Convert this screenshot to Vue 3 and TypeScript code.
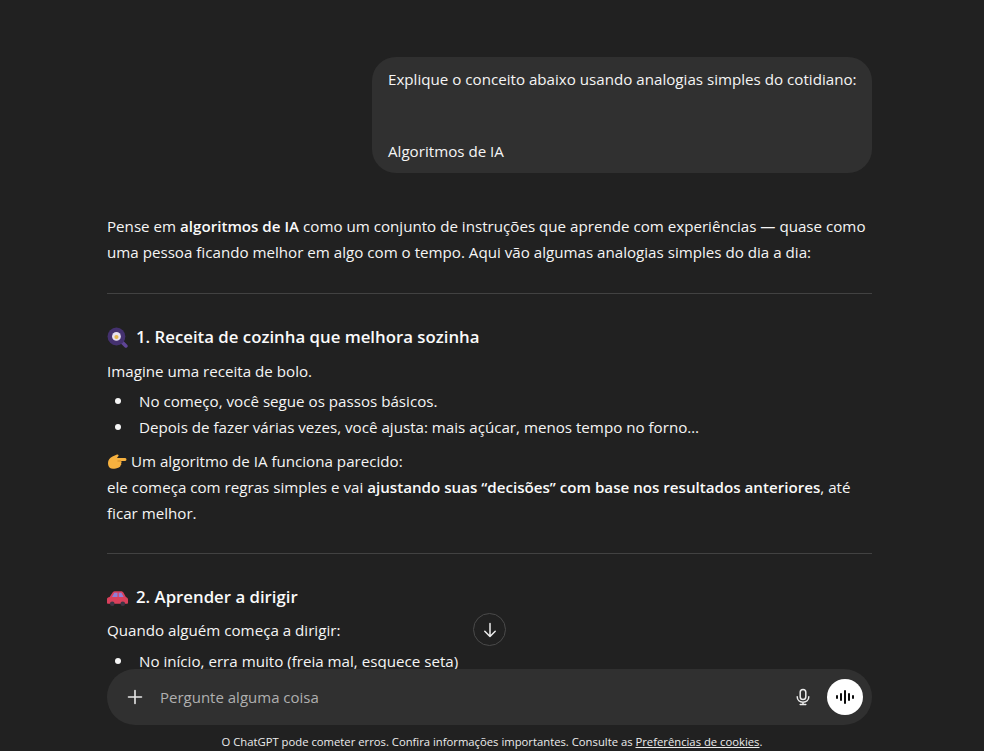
<script setup lang="ts">
const bars: number[] = [4, 8, 14, 8, 4]
</script>

<template>
  <div class="page">
    <main class="scroll">
      <div class="thread">
        <div class="user-row">
          <div class="bubble">
            <p>Explique o conceito abaixo usando analogias simples do cotidiano:</p>
            <p class="gap-line">Algoritmos de IA</p>
          </div>
        </div>

        <p class="line intro">Pense em <strong>algoritmos de IA</strong> como um conjunto de instruções que aprende com experiências — quase como uma pessoa ficando melhor em algo com o tempo. Aqui vão algumas analogias simples do dia a dia:</p>

        <hr class="rule" />

        <h3 class="heading">
          <svg class="emoji" viewBox="0 0 20 20">
            <path d="M13 13l5 5" stroke="#5f4596" stroke-width="3.400" stroke-linecap="round" />
            <circle cx="9" cy="9" r="8.500" fill="#44316f" />
            <circle cx="9" cy="9" r="4.200" fill="#e6e0f0" />
            <circle cx="9" cy="9.500" r="2" fill="#e3b64f" />
          </svg>
          <span>1. Receita de cozinha que melhora sozinha</span>
        </h3>
        <p class="line tight">Imagine uma receita de bolo.</p>
        <ul class="list">
          <li>No começo, você segue os passos básicos.</li>
          <li>Depois de fazer várias vezes, você ajusta: mais açúcar, menos tempo no forno…</li>
        </ul>
        <p class="line block">
          <svg class="emoji hand" viewBox="0 0 20 20">
            <path d="M1 11c0-3 1.500-5 4.500-6.500L10 2.500c1.300-.5 2.300 1 1 2L10 6h8.200c1.700 0 1.700 3 0 3H14c.8.7.8 1.800.1 2.400.5.900.1 1.800-.7 2.200.1 1-.6 1.700-1.500 1.800C9 16.500 5 17.500 3 16 1.700 15 1 13 1 11z" fill="#f6b13f" />
            <path d="M10.500 9H14" stroke="#cf8a28" stroke-width="1" />
          </svg>
          Um algoritmo de IA funciona parecido:<br />ele começa com regras simples e vai <strong>ajustando suas “decisões” com base nos resultados anteriores</strong>, até ficar melhor.
        </p>

        <hr class="rule second" />

        <h3 class="heading">
          <svg class="emoji" viewBox="0 0 20 20">
            <path d="M0 15v-3.500c0-1 1-1.800 2.500-2L5.500 5C6 4.300 7 4 8 4h5c1.200 0 2 .5 2.600 1.300L18 9.500c1.300.5 2 1.300 2 2.500v3c0 .5-.5 1-1 1H1c-.5 0-1-.5-1-1z" fill="#d9405c" />
            <path d="M7 5.500h3v4H4.800zM11.200 5.500h2.500l2.200 4h-4.700z" fill="#8f7fd6" />
            <circle cx="5" cy="16" r="2.200" fill="#3d3545" />
            <circle cx="15" cy="16" r="2.200" fill="#3d3545" />
          </svg>
          <span>2. Aprender a dirigir</span>
        </h3>
        <p class="line tight nudge">Quando alguém começa a dirigir:</p>
        <ul class="list">
          <li>No início, erra muito (freia mal, esquece seta)</li>
        </ul>
      </div>

      <button class="to-bottom" type="button" aria-label="Rolar para baixo">
        <svg viewBox="0 0 20 20" width="20" height="20" fill="none" stroke="#ececec" stroke-width="1.500" stroke-linecap="round" stroke-linejoin="round">
          <path d="M10 3.500v13M4.800 11.200l5.200 5.300 5.200-5.300" />
        </svg>
      </button>
    </main>

    <div class="composer">
      <svg class="plus" viewBox="0 0 20 20" width="20" height="20" fill="none" stroke="#e6e6e6" stroke-width="1.600" stroke-linecap="round">
        <path d="M10 3.500v13M3.500 10h13" />
      </svg>
      <span class="placeholder">Pergunte alguma coisa</span>
      <svg class="mic" viewBox="0 0 20 20" width="20" height="20" fill="none" stroke="#ececec" stroke-width="1.500" stroke-linecap="round">
        <rect x="7.200" y="2.500" width="5.600" height="10" rx="2.800" />
        <path d="M4.200 9.800c0 3.200 2.600 5.400 5.800 5.400s5.800-2.200 5.800-5.400M10 15.200v2.300M7.200 17.500h5.600" />
      </svg>
      <button class="voice" type="button" aria-label="Modo de voz">
        <span v-for="(h, i) in bars" :key="i" class="bar" :style="{ height: h + 'px' }"></span>
      </button>
    </div>

    <footer class="note">O ChatGPT pode cometer erros. Confira informações importantes. Consulte as <a href="#">Preferências de cookies</a>.</footer>
  </div>
</template>

<style>
html, body { margin: 0; background: #212121; }
</style>

<style scoped>
.page {
  width: 984px;
  height: 751px;
  background: #212121;
  color: #f5f5f5;
  font-family: "Open Sans", "Noto Sans", sans-serif;
  font-size: 15.150px;
  display: flex;
  flex-direction: column;
  overflow: hidden;
}
.scroll {
  position: relative;
  flex: 1;
  min-height: 0;
  overflow: hidden;
}
.thread {
  width: 765px;
  margin-left: 107px;
  padding-top: 57px;
}
.user-row { display: flex; justify-content: flex-end; }
.bubble {
  width: 500px;
  box-sizing: border-box;
  padding: 10px 15px 10px 16px;
  background: #303030;
  border-radius: 24px;
  line-height: 24px;
  white-space: nowrap;
}
.bubble p { margin: 0; }
.gap-line { margin-top: 48px !important; }
.line { margin: 0; line-height: 26px; }
.intro { margin-top: 40px; }
.rule {
  border: 0;
  border-top: 1px solid #424242;
  margin: 28px 0 0;
}
.rule.second { margin-top: 27px; }
.heading {
  margin: 30px 0 0;
  font-size: 16.800px;
  line-height: 26px;
  font-weight: 600;
  color: #fafafa;
  display: flex;
  align-items: center;
  gap: 8px;
}
.tight { margin-top: 8px; }
.tight.nudge { margin-top: 7px; }
.list {
  margin: 4px 0 0;
  padding: 0 0 0 8px;
  line-height: 26px;
  list-style: none;
}
.nudge + .list { margin-top: 5px; }
.list li { display: flex; align-items: center; gap: 18px; }
.list li::before {
  content: "";
  flex: none;
  width: 6px;
  height: 6px;
  border-radius: 50%;
  background: #f5f5f5;
}
.block { margin-top: 8px; }
strong { font-weight: 600; color: #fafafa; }
.emoji { width: 21px; height: 21px; flex: none; }
.hand { width: 20px; height: 20px; vertical-align: -5px; }
.to-bottom {
  position: absolute;
  left: 473px;
  top: 613px;
  width: 33px;
  height: 33px;
  padding: 0;
  border-radius: 50%;
  border: 1px solid #4a4a4a;
  background: #212121;
  display: flex;
  align-items: center;
  justify-content: center;
}
.composer {
  flex: none;
  width: 765px;
  height: 56px;
  margin-left: 107px;
  border-radius: 28px;
  background: #303030;
  display: flex;
  align-items: center;
  box-sizing: border-box;
  padding: 0 9px 0 18px;
}
.plus { flex: none; }
.placeholder { margin-left: 15px; color: #afafaf; flex: 1; font-size: 15px; }
.mic { flex: none; margin-right: 14px; }
.voice {
  width: 36px;
  height: 36px;
  border: 0;
  padding: 0;
  border-radius: 50%;
  background: #fff;
  display: flex;
  align-items: center;
  justify-content: center;
  gap: 2px;
}
.bar { width: 2px; background: #0d0d0d; border-radius: 1px; }
.note {
  flex: none;
  height: 26px;
  box-sizing: border-box;
  padding-top: 9px;
  text-align: center;
  font-size: 11.270px;
  line-height: 16px;
  color: #ececec;
}
.note a { color: inherit; text-decoration: underline; }
</style>
